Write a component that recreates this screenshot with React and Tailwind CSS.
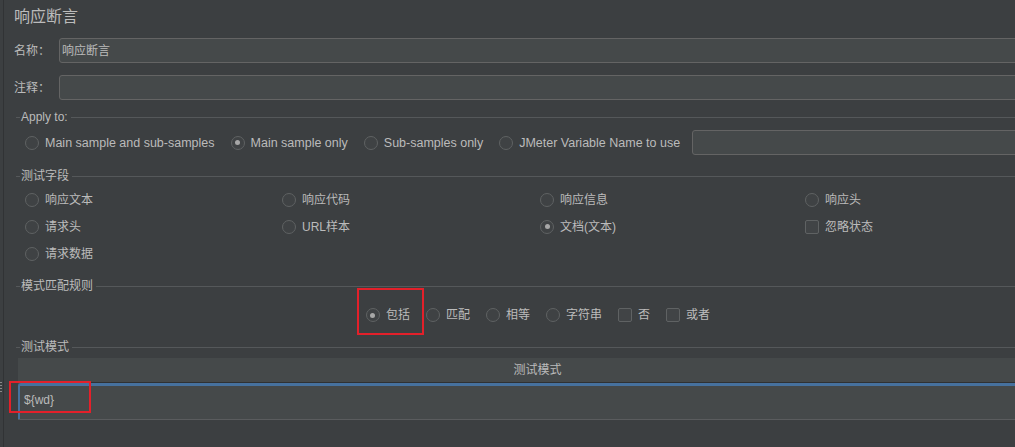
import React from 'react';

const FONT = "font-['Liberation_Sans','Noto_Sans_CJK_SC',sans-serif]";

const Radio = ({ checked }) => (
  <span className="flex h-[14px] w-[14px] shrink-0 items-center justify-center rounded-full border border-[#5f6263] bg-[#3f4244]">
    {checked && <span className="h-[5px] w-[5px] rounded-full bg-[#a7a7a7]" />}
  </span>
);

const Check = () => (
  <span className="h-[14px] w-[14px] shrink-0 rounded-[2px] border border-[#5f6263] bg-[#414446]" />
);

const Option = ({ label, checked, box }) => (
  <span className="flex items-center gap-[6px] leading-[16px]">
    {box ? <Check /> : <Radio checked={checked} />}
    <span>{label}</span>
  </span>
);

// titled border: only the top line, label sits on it
const SectionTitle = ({ children, className = '' }) => (
  <div className={`ml-[2px] flex h-[14px] items-center ${className}`}>
    <div className="h-px w-[4px] bg-[#55585a]" />
    <span className="px-[1px] leading-[14px]">{children}</span>
    <div className="ml-[2px] h-px flex-1 bg-[#55585a]" />
  </div>
);

const TextField = ({ value, className = '' }) => (
  <div className={`flex h-[25px] items-center rounded-[3px] border border-[#646464] bg-[#45494a] pl-[2px] ${className}`}>
    {value}
  </div>
);

const fields = [
  ['响应文本', false], ['响应代码', false], ['响应信息', false], ['响应头', false],
  ['请求头', false], ['URL样本', false], ['文档(文本)', true], ['忽略状态', false, true],
  ['请求数据', false],
];

export default function App() {
  return (
    <div className={`flex h-[447px] w-[1015px] overflow-hidden bg-[#3c3f41] text-[12px] text-[#bbbbbb] ${FONT}`}>
      {/* splitter strip */}
      <div className="flex w-[4px] shrink-0 flex-col border-r border-[#313335] pt-[382px]">
        <div className="flex flex-col gap-[2px]">
          <span className="h-[1px] w-[2px] bg-[#8a8a8a]" />
          <span className="h-[1px] w-[2px] bg-[#8a8a8a]" />
          <span className="h-[1px] w-[2px] bg-[#8a8a8a]" />
          <span className="h-[1px] w-[2px] bg-[#8a8a8a]" />
        </div>
      </div>

      <div className="w-[1067px] shrink-0 pl-[10px] pr-[11px]">
        <div className="mt-[7px] h-[20px] text-[16px] leading-[20px]">响应断言</div>

        <div className="mt-[11px] flex items-center">
          <span className="w-[45px] shrink-0">名称：</span>
          <TextField value="响应断言" className="flex-1" />
        </div>
        <div className="mt-[12px] flex items-center">
          <span className="w-[45px] shrink-0">注释：</span>
          <TextField value="" className="flex-1" />
        </div>

        <SectionTitle className="mt-[10px]">Apply to:</SectionTitle>
        <div className="ml-[11px] mt-[6px] flex h-[25px] items-center gap-[16px] text-[12.5px]">
          <Option label="Main sample and sub-samples" />
          <Option label="Main sample only" checked />
          <Option label="Sub-samples only" />
          <Option label="JMeter Variable Name to use" />
          <TextField value="" className="ml-[-4px] flex-1" />
        </div>

        <SectionTitle className="mt-[14px]">测试字段</SectionTitle>
        <div className="ml-[11px] mt-[3px] grid grid-cols-[257px_258px_265px_1fr]">
          {fields.map(([label, checked, box]) => (
            <div key={label} className="flex h-[27px] items-center">
              <Option label={label} checked={checked} box={box} />
            </div>
          ))}
        </div>

        <SectionTitle className="mt-[12px]">模式匹配规则</SectionTitle>
        <div className="ml-[2px] mt-[10px] flex h-[24px] items-center justify-center gap-[16px]">
          <span className="relative">
            <Option label="包括" checked />
            <span className="absolute -bottom-[12px] -left-[9px] -right-[14px] -top-[19px] border-2 border-[#e3202a]" />
          </span>
          <Option label="匹配" />
          <Option label="相等" />
          <Option label="字符串" />
          <Option label="否" box />
          <Option label="或者" box />
        </div>

        <SectionTitle className="mt-[13px]">测试模式</SectionTitle>
        <div className="ml-[4px] mr-[3px] mt-[4px]">
          <div className="flex h-[25px] items-center justify-center border-b border-[#2f3133] bg-[#45494a]">
            测试模式
          </div>
          <div className="relative h-[37px] border-b border-[#5a5c5e] bg-[#45494a]">
            <div className="flex h-full items-center rounded-tl-[3px] border-l-2 border-t-[3px] border-[#46719e] pb-[5px] pl-[4px]">
              {'${wd}'}
            </div>
            <span className="absolute -left-[9px] -top-[2px] h-[32px] w-[82px] border-2 border-[#e3202a]" />
          </div>
        </div>
      </div>
    </div>
  );
}
